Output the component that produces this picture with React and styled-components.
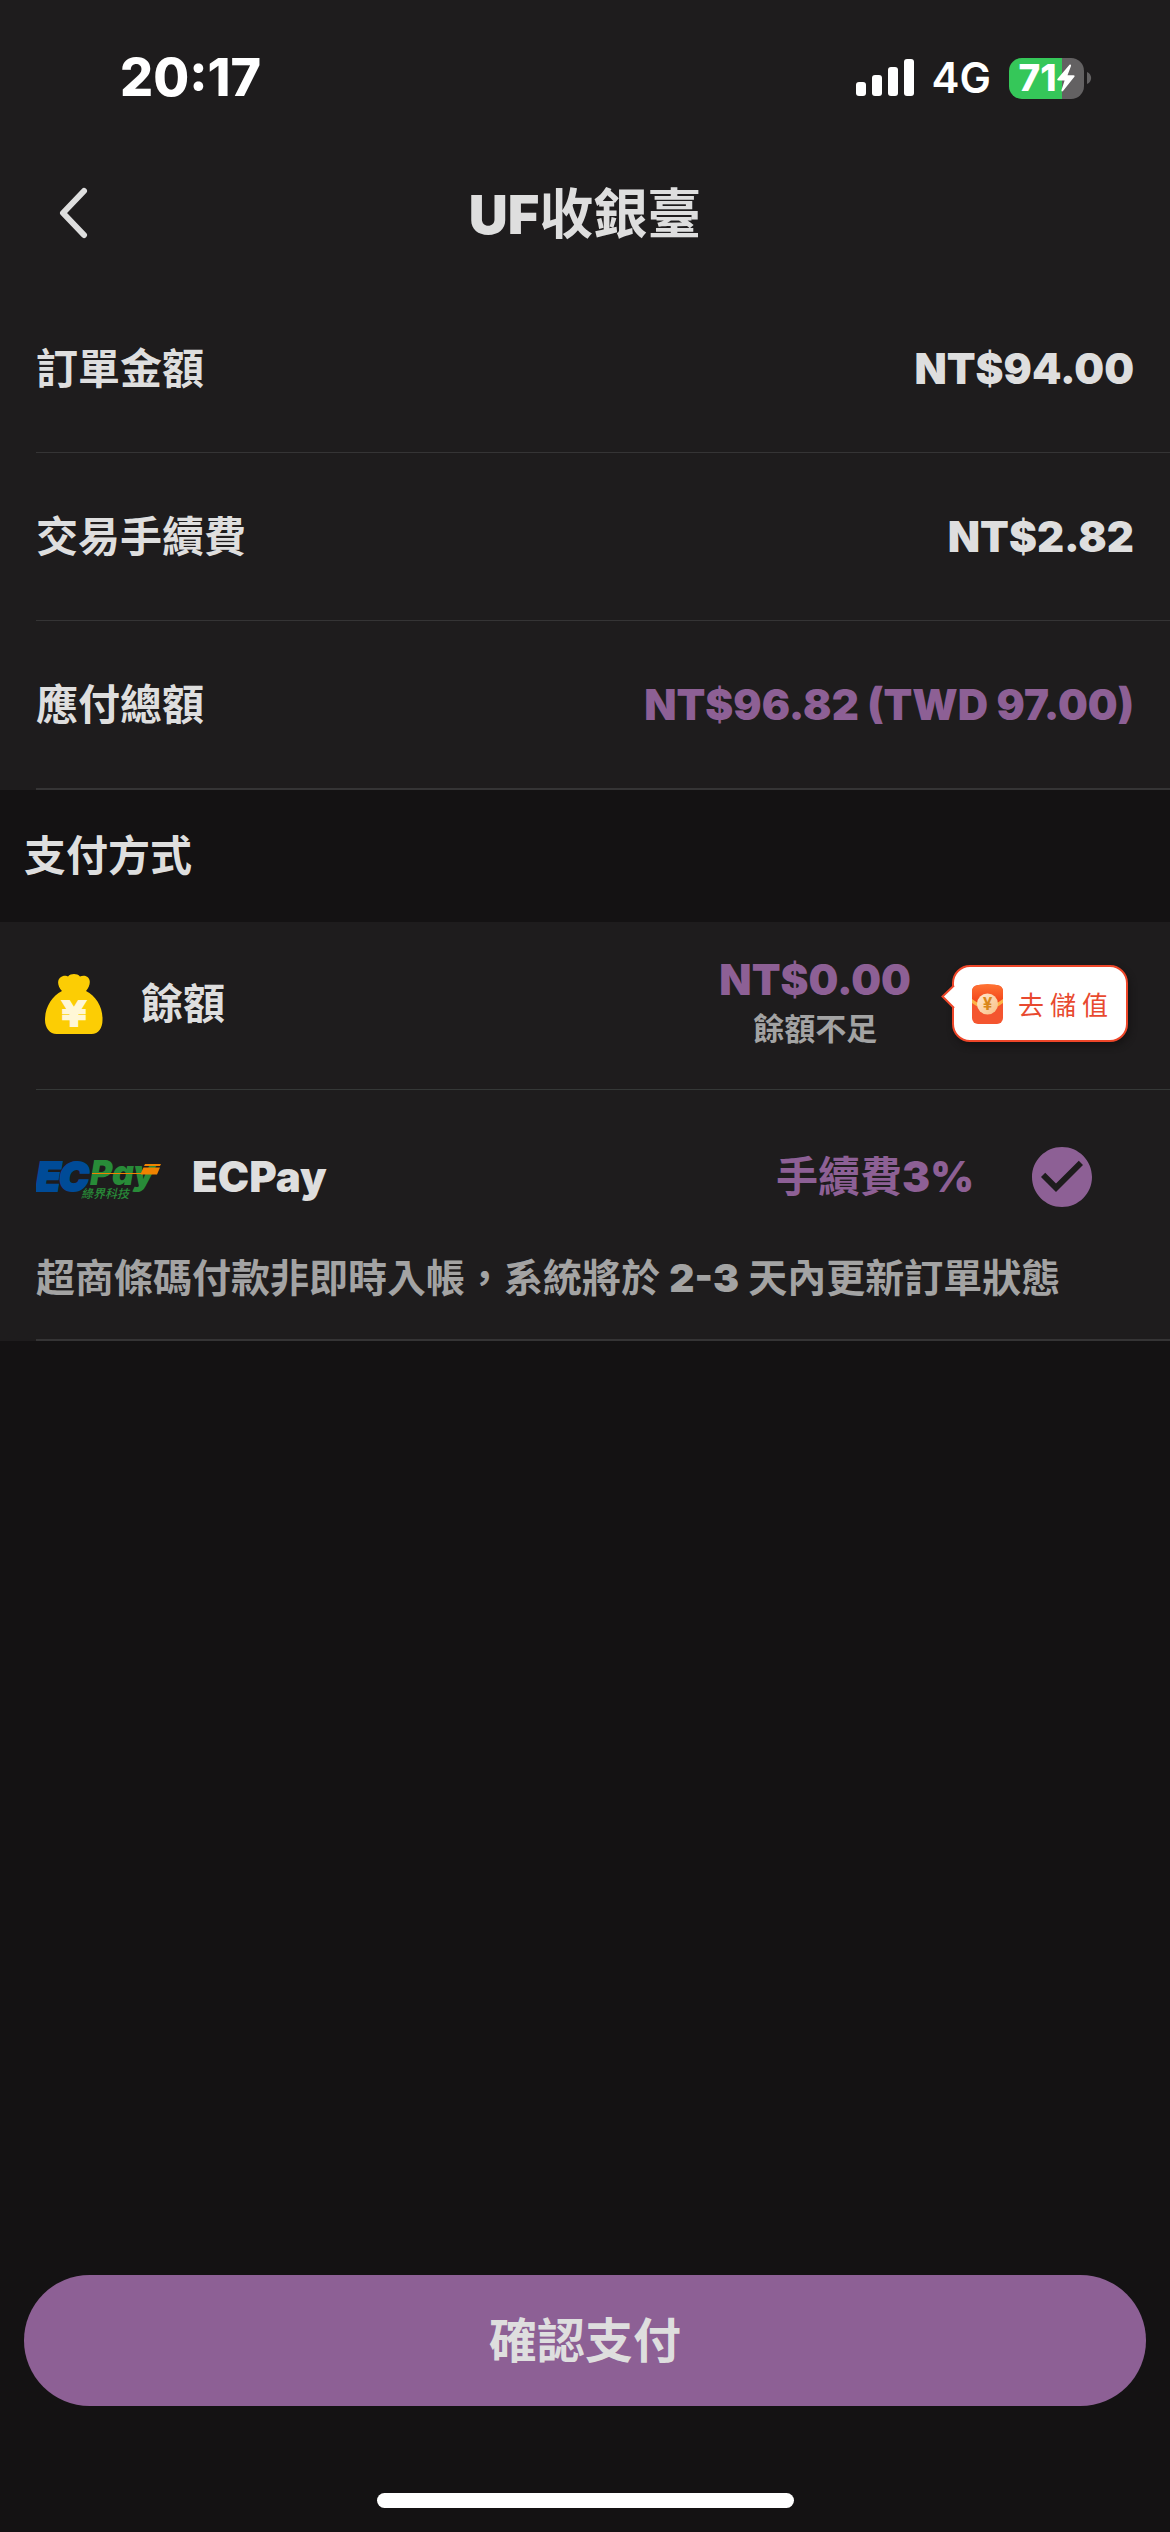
import React from "react";
import styled, { createGlobalStyle } from "styled-components";

const GlobalStyle = createGlobalStyle`
  * {
    box-sizing: border-box;
  }

  body {
    margin: 0;
    background: #141213;
    color: #dedede;
    font-family: Inter, "Noto Sans CJK TC", sans-serif;
    font-size: 42px;
    font-weight: 700;
    line-height: 50px;
  }

  svg {
    flex-shrink: 0;
  }
`;

const Page = styled.div`
  display: flex;
  flex-direction: column;
  min-height: 100vh;
`;

const StatusBar = styled.div`
  display: flex;
  align-items: center;
  justify-content: space-between;
  padding: 54px 78px 42px 120px;
  background: #1e1c1d;
  color: #fff;
`;

const Time = styled.time`
  font-size: 52px;
  font-weight: 800;
  line-height: 48px;
`;

const StatusIcons = styled.div`
  display: flex;
  align-items: center;
  gap: 18px;
  height: 48px;
`;

const Network = styled.span`
  font-size: 42px;
  font-weight: 600;
`;

const Battery = styled.div`
  display: flex;
  align-items: center;
  gap: 3px;
`;

const BatteryBody = styled.div`
  display: flex;
  align-items: center;
  justify-content: center;
  width: 75px;
  height: 41px;
  border-radius: 13px;
  background: linear-gradient(to right, #35c759 71%, #636162 71%);
  font-size: 37px;
  font-weight: 800;
  line-height: 40px;
`;

const Header = styled.header`
  display: grid;
  grid-template-columns: 120px 1fr 120px;
  align-items: center;
  height: 141px;
  background: #1e1c1d;
`;

const BackButton = styled.button`
  display: flex;
  padding: 20px 32px 24px 56px;
  border: 0;
  background: none;
  color: inherit;
`;

const Title = styled.h1`
  margin: 0;
  font-size: 54px;
  font-weight: 700;
  line-height: 64px;
  text-align: center;
`;

/* latin letters and digits are heavier than the chinese around them */
const Heavy = styled.span`
  font-weight: 900;
`;

const Summary = styled.dl`
  margin: 0;
  padding-left: 36px;
  background: #1e1c1d;
`;

const SummaryRow = styled.div`
  display: flex;
  align-items: center;
  justify-content: space-between;
  height: ${(props) => (props.$last ? "169px" : "168px")};
  padding-right: 36px;
  border-bottom: ${(props) => (props.$last ? "2px" : "1px")} solid #353435;
`;

const Name = styled.dt`
  font-weight: 700;
`;

const Amount = styled.dd`
  margin: 0;
  font-weight: 900;
  color: ${(props) => (props.$accent ? "#8d6095" : "inherit")};
`;

const SectionTitle = styled.h2`
  margin: 0;
  padding: 41px 24px;
  font-size: 42px;
  font-weight: 700;
  line-height: 50px;
`;

const Methods = styled.div`
  padding-left: 36px;
  background: #1e1c1d;
`;

const BalanceRow = styled.div`
  display: flex;
  align-items: center;
  height: 168px;
  padding: 0 42px 4px 9px;
  border-bottom: 1px solid #353837;
`;

const BalanceName = styled.span`
  flex: 1;
  padding-left: 38px;
`;

const Balance = styled.div`
  display: flex;
  flex-direction: column;
  align-items: center;
  margin-right: 30px;
`;

const BalanceAmount = styled.strong`
  color: #8d6095;
  font-weight: 900;
`;

const BalanceHint = styled.span`
  color: #a3a3a3;
  font-size: 31px;
  line-height: 48px;
`;

const TopUpButton = styled.button`
  position: relative;
  display: flex;
  align-items: center;
  gap: 14px;
  height: 77px;
  margin-left: 11px;
  padding: 0 12px 0 18px;
  border: 2px solid #ee4629;
  border-radius: 18px;
  background: #fff;
  box-shadow: 2px 4px 6px #161415;
  color: #e8492f;
  font-family: Inter, "Noto Sans CJK TC", sans-serif;
  font-size: 26px;
  font-weight: 400;
  letter-spacing: 6px;
`;

/* the speech bubble's pointer, drawn over the left border */
const Pointer = styled.svg`
  position: absolute;
  top: 16px;
  left: -13px;
`;

const EcpayMethod = styled.div`
  border-bottom: 2px solid #353435;
`;

const EcpayLabel = styled.label`
  display: flex;
  align-items: center;
  height: 168px;
  padding: 6px 72px 0 0;
`;

const EcpayName = styled.span`
  flex: 1;
  padding-left: 28px;
  font-weight: 900;
`;

const Fee = styled.span`
  margin-right: 52px;
  color: #8d6095;
`;

const Radio = styled.span`
  position: relative;
  display: flex;
`;

const RadioInput = styled.input`
  position: absolute;
  inset: 0;
  width: 100%;
  height: 100%;
  margin: 0;
  opacity: 0;
`;

const Note = styled.p`
  margin: 0;
  padding-bottom: 41px;
  color: #a3a3a3;
  font-size: 39px;
  line-height: 40px;
`;

const Footer = styled.footer`
  display: flex;
  flex-direction: column;
  align-items: center;
  gap: 87px;
  margin-top: auto;
  padding: 0 24px 24px;
`;

const ConfirmButton = styled.button`
  width: 100%;
  height: 131px;
  padding: 0 0 8px;
  border: 0;
  border-radius: 66px;
  background: #8d6095;
  color: #dedede;
  font-family: Inter, "Noto Sans CJK TC", sans-serif;
  font-size: 48px;
  font-weight: 700;
`;

const HomeIndicator = styled.div`
  width: 417px;
  height: 15px;
  border-radius: 8px;
  background: #fff;
`;

const Signal = () => (
  <svg width="58" height="38" viewBox="0 0 58 38" fill="#fff">
    <rect y="23" width="10" height="14" rx="3" />
    <rect x="16" y="16" width="10" height="21" rx="3" />
    <rect x="32" y="8" width="10" height="29" rx="3" />
    <rect x="48" width="10" height="37" rx="3" />
  </svg>
);

const Bolt = () => (
  <svg width="18" height="28" viewBox="0 0 18 28" fill="#fff">
    <path d="M12.500.8L.8 14.500q-1.500 2 .8 2h6L4.500 26c-.4 1.500.8 1.800 1.700.8L17.200 13q1.200-1.700-.8-1.700h-5.900L14 2c.3-1.500-.7-2-1.500-1.200z" />
  </svg>
);

const BackIcon = () => (
  <svg width="32" height="54" viewBox="0 0 32 54" fill="none">
    <path
      d="M28 5L7 27l21 22"
      stroke="#dedede"
      strokeWidth="6"
      strokeLinecap="round"
      strokeLinejoin="round"
    />
  </svg>
);

const MoneyBag = () => (
  <svg width="58" height="60" viewBox="0 0 58 60">
    <path
      d="M17 17C12 12 12 5 16 3c3-2 6-1 7-.5C26-.7 32-.7 35 2.500c2-1 5-1.500 7.500.5 3.500 2.500 3 9-1.500 14C51 22 58 33 57.500 46c0 8-4 14-11 14h-35C5 60 0 54 0 46 0 33 7 22 17 17z"
      fill="#fccd04"
    />
    <text
      x="29"
      y="52"
      fill="#fff7d6"
      stroke="#fff7d6"
      strokeWidth="2"
      fontFamily="'DejaVu Sans', sans-serif"
      fontSize="34"
      fontWeight="700"
      textAnchor="middle"
    >
      ¥
    </text>
  </svg>
);

const RedEnvelope = () => (
  <svg width="32" height="40" viewBox="0 0 32 40">
    <defs>
      <linearGradient id="flap" x1="0" y1="0" x2="0" y2="1">
        <stop offset="0" stopColor="#ff7434" />
        <stop offset="1" stopColor="#f03a15" />
      </linearGradient>
      <linearGradient id="coin" x1="0" y1="0" x2="1" y2="1">
        <stop offset="0" stopColor="#ffe9cf" />
        <stop offset="1" stopColor="#f9bf85" />
      </linearGradient>
    </defs>
    <rect y="1" width="31" height="39" rx="6" fill="#f4552f" />
    <path d="M0 16V7C0 3 4 0 15.500 0S31 3 31 7v9q-15.500 12-31 0z" fill="url(#flap)" />
    <path d="M0 15q15.500 12 31 0v4q-15.500 12-31 0z" fill="#fcb448" />
    <circle cx="15.500" cy="20" r="10.500" fill="url(#coin)" />
    <text
      x="15.500"
      y="26"
      fill="#d98619"
      fontFamily="Inter, sans-serif"
      fontSize="17"
      fontWeight="700"
      textAnchor="middle"
      letterSpacing="0"
    >
      ¥
    </text>
  </svg>
);

const EcpayLogo = () => (
  <svg width="128" height="60" viewBox="0 0 128 60" role="img" aria-label="綠界科技 ECPay">
    <g fontFamily="Inter, sans-serif" fontStyle="italic">
      <g fill="#004b97" stroke="#004b97" strokeWidth="2" fontSize="40" fontWeight="900">
        <text x="0" y="44">
          E
        </text>
        <text x="23" y="44">
          C
        </text>
      </g>
      <text x="54" y="38" fill="#288b38" fontSize="34" fontWeight="900">
        Pay
      </text>
    </g>
    <text
      x="45"
      y="51"
      fill="#288b38"
      fontFamily="'Noto Sans CJK TC', sans-serif"
      fontSize="12"
      fontStyle="italic"
      fontWeight="500"
    >
      綠界科技
    </text>
    <g fill="#f08300">
      <path d="M109 17h16l-1 2h-16z" />
      <path d="M107.500 20.500h16.500l-3 7h-15.500l-1-.5H56v-1h49z" />
    </g>
  </svg>
);

const CheckIcon = () => (
  <svg width="72" height="72" viewBox="0 0 24 24" fill="#8d6095">
    <path d="M12 2C6.480 2 2 6.480 2 12s4.480 10 10 10 10-4.480 10-10S17.520 2 12 2zm-2 15l-5-5 1.410-1.410L10 14.170l7.590-7.590L19 8l-9 9z" />
  </svg>
);

const rows = [
  { name: "訂單金額", amount: "NT$94.00" },
  { name: "交易手續費", amount: "NT$2.82" },
  { name: "應付總額", amount: "NT$96.82 (TWD 97.00)", accent: true },
];

const App = () => {
  return (
    <>
      <GlobalStyle />
      <Page>
        <StatusBar>
          <Time>20:17</Time>
          <StatusIcons>
            <Signal />
            <Network>4G</Network>
            <Battery>
              <BatteryBody>
                71
                <Bolt />
              </BatteryBody>
              <svg width="5" height="14" viewBox="0 0 5 14" fill="#636162">
                <path d="M0 1c5.500 2 5.500 10 0 12z" />
              </svg>
            </Battery>
          </StatusIcons>
        </StatusBar>
        <Header>
          <BackButton type="button" aria-label="返回">
            <BackIcon />
          </BackButton>
          <Title>
            <Heavy>UF</Heavy>收銀臺
          </Title>
        </Header>
        <main>
          <Summary>
            {rows.map((row, i) => (
              <SummaryRow key={row.name} $last={i === rows.length - 1}>
                <Name>{row.name}</Name>
                <Amount $accent={row.accent}>{row.amount}</Amount>
              </SummaryRow>
            ))}
          </Summary>
          <SectionTitle>支付方式</SectionTitle>
          <Methods>
            <BalanceRow>
              <MoneyBag />
              <BalanceName>餘額</BalanceName>
              <Balance>
                <BalanceAmount>NT$0.00</BalanceAmount>
                <BalanceHint>餘額不足</BalanceHint>
              </Balance>
              <TopUpButton type="button">
                <Pointer width="16" height="28" viewBox="0 0 16 28">
                  <path d="M15 1L1.500 13.500 15 27" fill="#fff" />
                  <path d="M13 2.500L1.500 13.500 13 25" fill="none" stroke="#ee4629" strokeWidth="2" />
                </Pointer>
                <RedEnvelope />
                去儲值
              </TopUpButton>
            </BalanceRow>
            <EcpayMethod>
              <EcpayLabel>
                <EcpayLogo />
                <EcpayName>ECPay</EcpayName>
                <Fee>
                  手續費<Heavy>3%</Heavy>
                </Fee>
                <Radio>
                  <RadioInput type="radio" name="method" value="ecpay" defaultChecked />
                  <CheckIcon />
                </Radio>
              </EcpayLabel>
              <Note>
                超商條碼付款非即時入帳，系統將於 <Heavy>2-3</Heavy> 天內更新訂單狀態
              </Note>
            </EcpayMethod>
          </Methods>
        </main>
        <Footer>
          <ConfirmButton type="button">確認支付</ConfirmButton>
          <HomeIndicator />
        </Footer>
      </Page>
    </>
  );
};

export default App;
